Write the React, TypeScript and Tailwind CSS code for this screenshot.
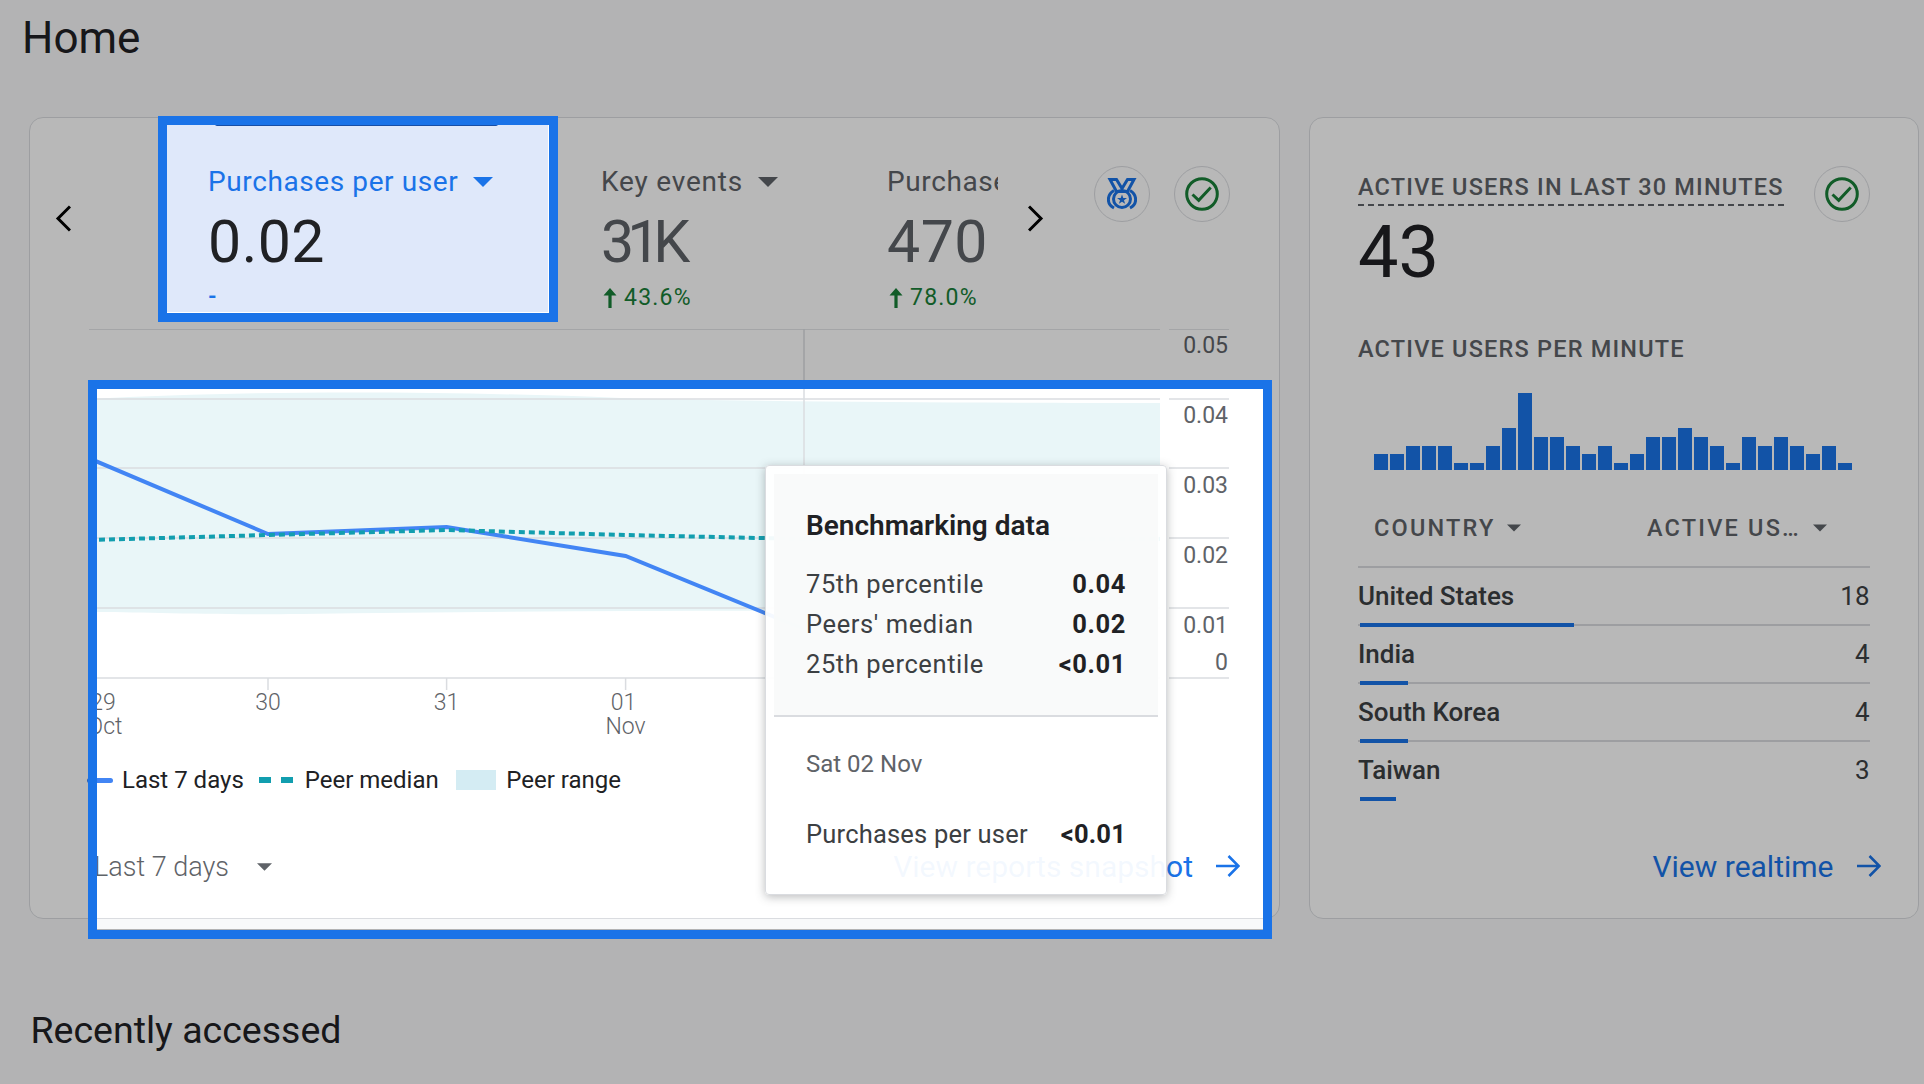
const bars = [16, 16, 24, 24, 24, 7, 7, 24, 42, 77, 33, 33, 24, 16, 24, 7, 16, 33, 33, 42, 33, 24, 7, 33, 24, 33, 24, 16, 24, 7];

const countries = [
  { name: "United States", users: 18 },
  { name: "India", users: 4 },
  { name: "South Korea", users: 4 },
  { name: "Taiwan", users: 3 },
];

const benchmarks = [
  { label: "75th percentile", value: "0.04" },
  { label: "Peers' median", value: "0.02" },
  { label: "25th percentile", value: "<0.01" },
];

function Caret({ className }: { className: string }) {
  return (
    <svg viewBox="0 0 20 10" className={className} fill="currentColor">
      <path d="M0 0H20L10 10Z" />
    </svg>
  );
}

function ArrowRight({ className }: { className: string }) {
  return (
    <svg viewBox="0 0 24 22" className={className} fill="none" stroke="currentColor" strokeWidth="2.6">
      <path d="M0 11H22M12.5 1L22.5 11L12.5 21" />
    </svg>
  );
}

function Trend({ value }: { value: string }) {
  return (
    <div className="mt-[10px] flex h-[28px] items-center gap-[7px] pl-[2px] text-[23px] tracking-[1.2px] text-[#188038]">
      <svg viewBox="0 0 14 20" className="h-[20px] w-[14px]" fill="currentColor">
        <path d="M7 0L13.5 7.5H8.6V20H5.4V7.5H.5Z" />
      </svg>
      {value}
    </div>
  );
}

function Check() {
  return (
    <div className="flex h-[56px] w-[56px] shrink-0 items-center justify-center rounded-full border-[1.5px] border-[#dadce0]">
      <svg viewBox="0 0 34 34" className="h-[34px] w-[34px]" fill="none" stroke="#188038" strokeWidth="3">
        <circle cx="17" cy="17" r="15.3" />
        <path d="M7.5 17.5L13.7 23.3L25.7 10.5" />
      </svg>
    </div>
  );
}

function Medal() {
  return (
    <div className="flex h-[56px] w-[56px] shrink-0 items-center justify-center rounded-full border-[1.5px] border-[#dadce0]">
      <svg viewBox="0 0 30 32" className="h-[32px] w-[30px]" fill="none" stroke="#1a73e8" strokeWidth="3">
        <path d="M3 1.5H9.5L15 10.5L20.5 1.5H27L20.5 13.5H9.5Z" />
        <circle cx="15" cy="21" r="8.5" />
        <path d="M7 12.5C-.5 17 -.5 26 7 30M23 12.5C30.5 17 30.5 26 23 30" />
        <path d="M15 16.5L16.3 20H20L17 22.2L18.1 25.8L15 23.7L11.9 25.8L13 22.2L10 20H13.7Z" fill="#1a73e8" stroke="none" />
      </svg>
    </div>
  );
}

function Chart() {
  const gridY = [329, 399, 468, 538, 608, 678];
  const yLabels = [
    { y: 353, t: "0.05" },
    { y: 423, t: "0.04" },
    { y: 493, t: "0.03" },
    { y: 563, t: "0.02" },
    { y: 633, t: "0.01" },
    { y: 670, t: "0" },
  ];
  const xLabels = [
    { x: 102, a: "29", b: "Oct" },
    { x: 267, a: "30" },
    { x: 445.6, a: "31" },
    { x: 622.6, a: "01", b: "Nov" },
  ];
  return (
    <svg viewBox="88 329 1142 410" className="ml-[59px] block h-[410px] w-[1142px] shrink-0">
      <path
        d="M88 399C250 390 450 391 620 398C760 402 1000 403 1159 403V610C900 612 600 609 300 614C200 615 140 612 88 612Z"
        fill="#e9f6f8"
      />
      {gridY.map((y) => (
        <g key={y} stroke="#dadce0" strokeWidth="1.5">
          <line x1="88" x2="1159" y1={y} y2={y} />
          <line x1="1168" x2="1228" y1={y} y2={y} />
        </g>
      ))}
      <line x1="803" x2="803" y1="329" y2="690" stroke="#dadce0" strokeWidth="1.5" />
      {[267, 445.6, 624.6].map((x) => (
        <line key={x} x1={x} x2={x} y1="678" y2="690" stroke="#dadce0" strokeWidth="1.5" />
      ))}
      <path d="M85 457L267 534L445.6 527L624.6 556L803 629" fill="none" stroke="#4285f4" strokeWidth="4" />
      <path
        d="M88 540L267 535L445.6 530L624.6 535L803 539L1159 539"
        fill="none"
        stroke="#129eaf"
        strokeWidth="4"
        strokeDasharray="6 4"
      />
      {yLabels.map((l) => (
        <text key={l.t} x="1227" y={l.y} textAnchor="end" fontFamily="Roboto" fontSize="23" fill="#5f6368">
          {l.t}
        </text>
      ))}
      {xLabels.map((l) => (
        <text key={l.a} textAnchor="middle" fontFamily="Roboto" fontSize="23" fontWeight="300" fill="#5f6368">
          <tspan x={l.x} y="710">
            {l.a}
          </tspan>
          {l.b && (
            <tspan x={l.x + 2} y="734">
              {l.b}
            </tspan>
          )}
        </text>
      ))}
    </svg>
  );
}

export default function App() {
  return (
    <div className="relative flex h-[1084px] w-[1924px] flex-col overflow-hidden bg-[#f8f9fa] font-['Roboto',sans-serif] text-[#202124]">
      <header className="h-[116.5px] shrink-0 pl-[22px] pt-[12px] text-[44px] leading-[52px]">Home</header>

      <main className="flex shrink-0 pl-[28.5px]">
        <section className="h-[802px] w-[1251px] shrink-0 rounded-[14px] border-[1.5px] border-[#dadce0] bg-white">
          <div className="flex h-[211.5px] items-start">
            <div className="w-[136.5px] shrink-0 pl-[25.5px] pt-[87.5px]">
              <svg viewBox="0 0 16 27" className="h-[27px] w-[16px]" fill="none" stroke="#000" strokeWidth="3">
                <path d="M15 1.5L3 13.5L15 25.5" />
              </svg>
            </div>

            <div className="relative mt-[6.5px] h-[188px] w-[382px] shrink-0 bg-[#dfe8fa] pl-[42px] pt-[42px]">
              <div className="absolute left-[49px] top-0 h-[2px] w-[283px] rounded-b bg-[#174ea6]" />
              <div className="flex h-[32px] items-center gap-[15px] text-[28px] leading-[32px] tracking-[0.6px] text-[#1a73e8]">
                Purchases per user
                <Caret className="h-[10px] w-[20px]" />
              </div>
              <div className="mt-[12px] text-[59px] leading-[64px] tracking-[0.5px]">0.02</div>
              <div className="mt-[9px] text-[22px] font-bold leading-[28px] text-[#1a73e8]">-</div>
            </div>

            <div className="mt-[48.5px] w-[287px] shrink-0 pl-[53px] text-[#5f6368]">
              <div className="flex h-[32px] items-center gap-[15px] text-[28px] leading-[32px] tracking-[0.8px]">
                Key events
                <Caret className="h-[10px] w-[20px]" />
              </div>
              <div className="mt-[12px] text-[59px] leading-[64px] tracking-[-7px]">31K</div>
              <Trend value="43.6%" />
            </div>

            <div className="mt-[48.5px] w-[163px] shrink-0 pl-[52px] text-[#5f6368]">
              <div className="h-[32px] overflow-hidden whitespace-nowrap text-[28px] leading-[32px] tracking-[0.6px]">Purchases</div>
              <div className="mt-[12px] text-[59px] leading-[64px] tracking-[0.5px]">470</div>
              <Trend value="78.0%" />
            </div>

            <div className="ml-[29.5px] w-[17px] shrink-0 pt-[87.5px]">
              <svg viewBox="0 0 16 27" className="h-[27px] w-[16px]" fill="none" stroke="#000" strokeWidth="3">
                <path d="M1 1.5L13 13.5L1 25.5" />
              </svg>
            </div>

            <div className="ml-[49px] mt-[48.5px] flex gap-[24px]">
              <Medal />
              <Check />
            </div>
          </div>

          <Chart />

          <div className="ml-[57.5px] mt-[21px] flex h-[40px] items-center text-[24px]">
            <span className="h-[5px] w-[26px] rounded-full bg-[#4285f4]" />
            <span className="ml-[9px]">Last 7 days</span>
            <span className="ml-[15px] h-[6px] w-[12px] bg-[#129eaf]" />
            <span className="ml-[10px] h-[6px] w-[12px] bg-[#129eaf]" />
            <span className="ml-[12px]">Peer median</span>
            <span className="ml-[17.5px] h-[20px] w-[40px] bg-[#d4ecf3]" />
            <span className="ml-[10px]">Peer range</span>
          </div>

          <div className="ml-[64.5px] mt-[47px] flex h-[40px] w-[1146px] items-center text-[27px] font-light text-[#5f6368]">
            Last 7 days
            <Caret className="ml-[28px] h-[8px] w-[15px]" />
            <div className="mb-[2px] ml-auto flex items-center gap-[23px] text-[30px] font-normal text-[#1a73e8]">
              View reports snapshot
              <ArrowRight className="h-[22px] w-[24px]" />
            </div>
          </div>
        </section>

        <section className="ml-[29.5px] h-[802px] w-[610px] shrink-0 rounded-[14px] border-[1.5px] border-[#dadce0] bg-white pl-[48px] pr-[48.5px]">
          <div className="flex justify-between pt-[48.5px]">
            <div>
              <div className="mt-[5px] border-b-2 border-dashed border-[#5f6368] text-[23.5px] font-medium leading-[33px] tracking-[1.2px] text-[#5f6368]">
                ACTIVE USERS IN LAST 30 MINUTES
              </div>
              <div className="mt-[10.5px] text-[72px] leading-[72px]">43</div>
            </div>
            <Check />
          </div>

          <div className="mt-[44.5px] h-[32px] text-[23.5px] font-medium leading-[32px] tracking-[1.2px] text-[#5f6368]">
            ACTIVE USERS PER MINUTE
          </div>
          <div className="ml-[16px] mt-[28px] flex h-[77px] items-end gap-[2px]">
            {bars.map((h, i) => (
              <div key={i} className="w-[14px] bg-[#1a73e8]" style={{ height: h }} />
            ))}
          </div>

          <div className="mt-[43px] flex h-[55px] border-b-2 border-[#dadce0] pb-[23px] text-[23.5px] font-medium leading-[32px] tracking-[2.2px] text-[#5f6368]">
            <div className="ml-[16px] flex w-[273px] items-center gap-[11px]">
              COUNTRY
              <Caret className="h-[8px] w-[14px]" />
            </div>
            <div className="flex items-center gap-[12px]">
              ACTIVE US…
              <Caret className="h-[8px] w-[14px]" />
            </div>
          </div>

          {countries.map((c, i) => (
            <div key={c.name}>
              <div className="flex h-[56px] items-center justify-between text-[26px]">
                <span className="font-medium text-[#3c4043]">{c.name}</span>
                <span className="text-[#3c4043]">{c.users}</span>
              </div>
              <div className={i < countries.length - 1 ? "h-[2px] bg-[#dadce0]" : "h-[2px]"}>
                <div className="ml-[2px] h-[4px] -translate-y-[1px] bg-[#1a73e8]" style={{ width: c.users * 11.9 }} />
              </div>
            </div>
          ))}

          <div className="mr-[-11px] mt-[46px] flex h-[40px] items-center justify-end gap-[23px] text-[30px] text-[#1a73e8]">
            View realtime
            <ArrowRight className="h-[22px] w-[24px]" />
          </div>
        </section>
      </main>

      <h2 className="ml-[30.5px] mt-[89px] text-[37.5px] leading-[44px]">Recently accessed</h2>

      {/* dim layer with the two spotlight holes cut out */}
      <div className="pointer-events-none absolute inset-0 z-10 bg-black/28 [clip-path:path(evenodd,'M0_0H1924V1084H0ZM167_125H549V313H167ZM97_389H1263V929H97Z')]" />
      <div className="pointer-events-none absolute left-[158px] top-[116px] z-20 h-[206px] w-[400px] border-[9px] border-[#1a73e8]" />
      <div className="pointer-events-none absolute left-[88px] top-[380px] z-20 h-[559px] w-[1184px] border-[9px] border-[#1a73e8]" />

      <div className="absolute left-[765px] top-[465px] z-30 h-[430px] w-[402px] rounded-[4px] border border-[#dadce0] bg-white/95 p-[8px] shadow-[0_2px_10px_rgba(60,64,67,0.35)]">
        <div className="h-[243px] border-b-2 border-[#dadce0] bg-[#f8f9fa]/90 px-[32px] pt-[35px]">
          <div className="text-[28px] font-semibold leading-[34px] text-[#202124]">Benchmarking data</div>
          <div className="mt-[21px]">
            {benchmarks.map((b) => (
              <div key={b.label} className="flex h-[40px] items-center justify-between text-[25.5px] tracking-[0.6px] text-[#3c4043]">
                {b.label}
                <span className="font-bold text-[#202124]">{b.value}</span>
              </div>
            ))}
          </div>
        </div>
        <div className="px-[32px] pt-[30px] text-[24px] leading-[34px] text-[#5f6368]">Sat 02 Nov</div>
        <div className="mt-[36px] flex h-[34px] items-center justify-between px-[32px] text-[25.5px] tracking-[0.2px] text-[#3c4043]">
          Purchases per user
          <span className="font-bold text-[#202124]">{"<0.01"}</span>
        </div>
      </div>
    </div>
  );
}
